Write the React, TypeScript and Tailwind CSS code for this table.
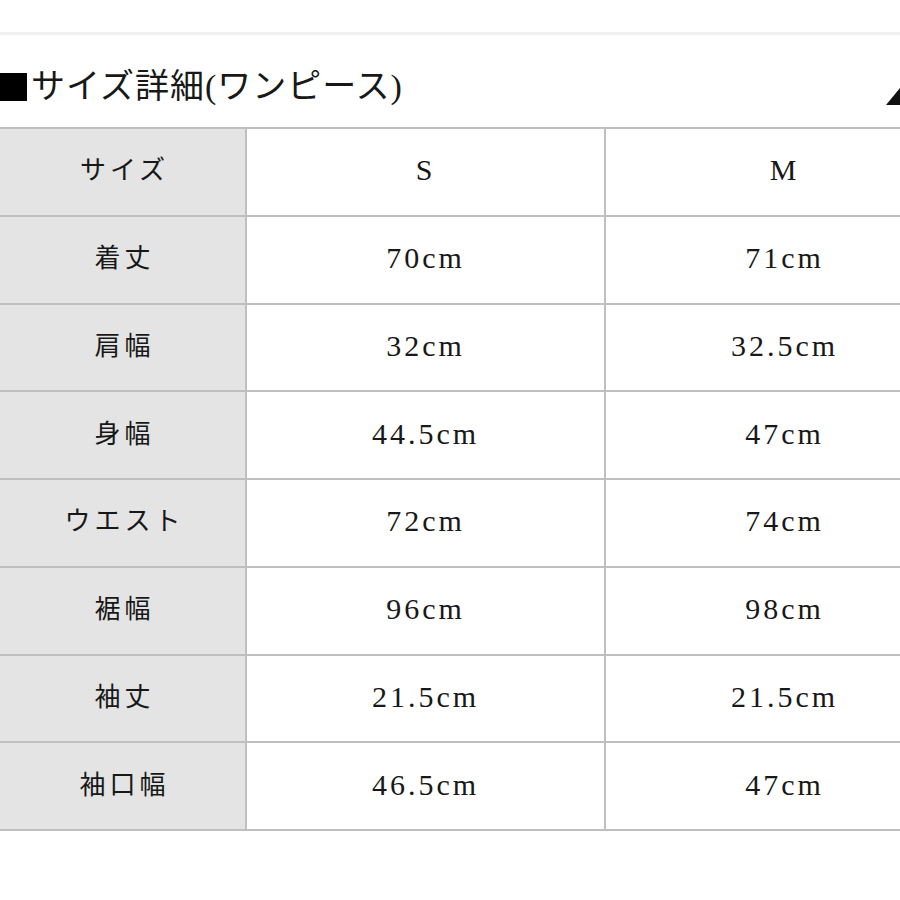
const rows: [string, string, string][] = [
  ["サイズ", "S", "M"],
  ["着丈", "70cm", "71cm"],
  ["肩幅", "32cm", "32.5cm"],
  ["身幅", "44.5cm", "47cm"],
  ["ウエスト", "72cm", "74cm"],
  ["裾幅", "96cm", "98cm"],
  ["袖丈", "21.5cm", "21.5cm"],
  ["袖口幅", "46.5cm", "47cm"],
];

const font = { fontFamily: '"Liberation Serif", "Noto Sans CJK JP", serif' };

export default function App() {
  return (
    <div className="w-[900px] h-[900px] bg-white overflow-hidden text-[#181818]" style={font}>
      <div className="h-[32px]" />
      <div className="h-[3px] bg-[#f0f0f0]" />
      <div className="relative h-[92px] flex items-center pt-[12px]">
        <div className="w-[27px] h-[28px] bg-black shrink-0" />
        <span className="ml-[4px] text-[34px] leading-none tracking-[1px]">サイズ詳細(ワンピース)</span>
        <svg className="absolute right-0 top-[53px]" width="14" height="17" viewBox="0 0 14 17">
          <polygon points="0,17 14,17 14,0" fill="#111" />
        </svg>
      </div>
      <div className="w-[963px] border-t-2 border-[#bfbfbf]">
        {rows.map(([label, s, m], i) => (
          <div key={i} className="grid grid-cols-[245px_359px_359px] h-[87.75px] border-b-2 border-[#bfbfbf]">
            <div className="bg-[#e4e4e4] flex items-center justify-center text-[26px] tracking-[4px] pl-[4px] pb-[2px]">
              {label}
            </div>
            <div className="border-l-2 border-[#bfbfbf] flex items-center justify-center text-[30px] tracking-[3px] pb-[4px]">
              {s}
            </div>
            <div className="border-l-2 border-[#bfbfbf] flex items-center justify-center text-[30px] tracking-[3px] pb-[4px]">
              {m}
            </div>
          </div>
        ))}
      </div>
    </div>
  );
}
